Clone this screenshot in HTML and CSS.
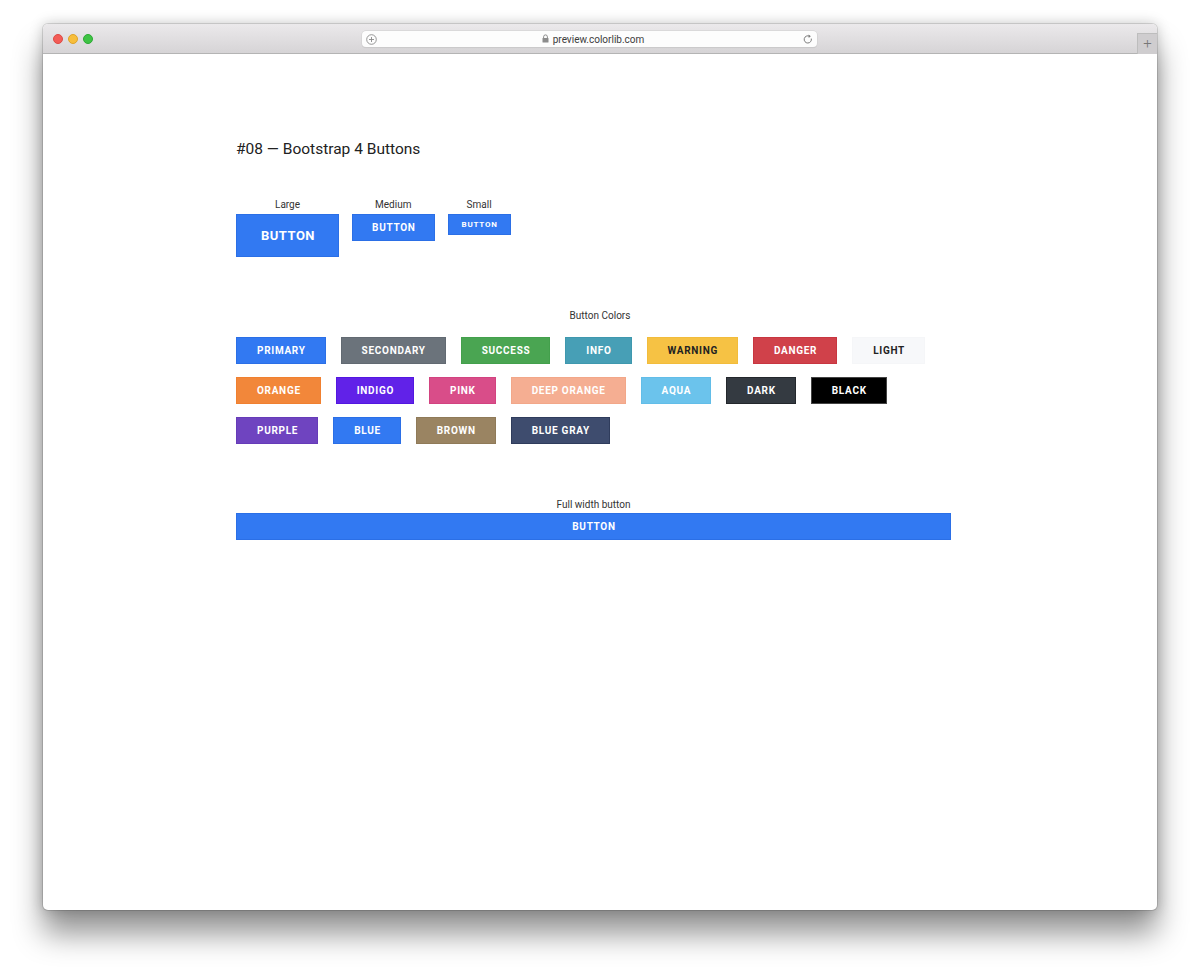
FILE: index.html
```html
<!DOCTYPE html>
<html>
<head>
  <title>#08 - Bootstrap 4 Buttons</title>
  <link rel="stylesheet" href="styles.css">
</head>
<body>
  <div class="window">
    <div class="titlebar">
      <div class="lights">
        <span class="light red"></span>
        <span class="light yellow"></span>
        <span class="light green"></span>
      </div>
      <div class="urlbar">
        <svg class="url-plus" width="11" height="11" viewBox="0 0 11 11">
          <circle cx="5.5" cy="5.5" r="4.8" fill="none" stroke="#8a8a8a" stroke-width="0.9"/>
          <path d="M5.5 3v5M3 5.5h5" stroke="#8a8a8a" stroke-width="0.9"/>
        </svg>
        <div class="url">
          <svg width="7" height="9" viewBox="0 0 7 9">
            <path d="M1.6 4V2.8a1.9 1.9 0 0 1 3.8 0V4" fill="none" stroke="#8c8c8c" stroke-width="1"/>
            <rect x="0.5" y="4" width="6" height="4.6" rx="0.6" fill="#8c8c8c"/>
          </svg>
          <span>preview.colorlib.com</span>
        </div>
        <svg class="url-reload" width="10" height="11" viewBox="0 0 10 11">
          <path d="M8.3 4.6A3.6 3.6 0 1 1 6.4 2.2" fill="none" stroke="#7a7a7a" stroke-width="1"/>
          <path d="M5.6 0.6l2.2 1.6-2.1 1.7z" fill="#7a7a7a"/>
        </svg>
      </div>
      <div class="newtab">+</div>
    </div>

    <div class="page">
      <div class="container">
        <h2 class="heading">#08 &mdash; Bootstrap 4 Buttons</h2>

        <div class="sizes">
          <div class="size">
            <div class="label">Large</div>
            <a class="btn blue btn-lg">Button</a>
          </div>
          <div class="size">
            <div class="label">Medium</div>
            <a class="btn blue btn-md">Button</a>
          </div>
          <div class="size">
            <div class="label">Small</div>
            <a class="btn blue btn-sm">Button</a>
          </div>
        </div>

        <div class="label center colors-label">Button Colors</div>
        <div class="colors">
          <a class="btn primary">Primary</a>
          <a class="btn secondary">Secondary</a>
          <a class="btn success">Success</a>
          <a class="btn info">Info</a>
          <a class="btn warning">Warning</a>
          <a class="btn danger">Danger</a>
          <a class="btn light-btn">Light</a>
        </div>
        <div class="colors">
          <a class="btn orange">Orange</a>
          <a class="btn indigo">Indigo</a>
          <a class="btn pink">Pink</a>
          <a class="btn deep-orange">Deep Orange</a>
          <a class="btn aqua">Aqua</a>
          <a class="btn dark">Dark</a>
          <a class="btn black">Black</a>
        </div>
        <div class="colors">
          <a class="btn purple">Purple</a>
          <a class="btn blue">Blue</a>
          <a class="btn brown">Brown</a>
          <a class="btn blue-gray">Blue Gray</a>
        </div>

        <div class="full">
          <div class="label center">Full width button</div>
          <a class="btn blue btn-block">Button</a>
        </div>
      </div>
    </div>
  </div>
</body>
</html>
```

FILE: styles.css
```css
body, html {
  margin: 0;
  height: 100%;
  background: #fff;
}
body {
  padding: 24px 43px 0;
  box-sizing: border-box;
  font-family: Roboto, "Liberation Sans", sans-serif;
  overflow: hidden;
}
.window {
  width: 1114px;
  height: 886px;
  display: flex;
  flex-direction: column;
  border-radius: 5px;
  overflow: hidden;
  background: #fff;
  box-shadow: 0 24px 30px rgba(0, 0, 0, 0.42), 0 0 14px rgba(0, 0, 0, 0.22), 0 0 0 1px rgba(0, 0, 0, 0.12);
}
.titlebar {
  height: 29px;
  flex: none;
  display: flex;
  align-items: flex-start;
  background: linear-gradient(#ebe9eb, #d6d4d6);
  border-bottom: 1px solid #b4b4b4;
  position: relative;
}
.lights {
  display: flex;
  gap: 5px;
  padding: 10px 0 0 10px;
}
.light {
  width: 10px;
  height: 10px;
  box-sizing: border-box;
  border-radius: 50%;
}
.light.red { background: #f35c57; border: 0.5px solid #dd4a44; }
.light.yellow { background: #f7be3b; border: 0.5px solid #dea42a; }
.light.green { background: #3ec344; border: 0.5px solid #2ca934; }
.urlbar {
  margin: 7px 0 0 269px;
  width: 455px;
  height: 16px;
  box-sizing: border-box;
  background: #fdfdfd;
  border-radius: 4px;
  box-shadow: 0 0 0 0.5px #cfcfcf, 0 0.5px 1px rgba(0, 0, 0, 0.1);
  display: flex;
  align-items: center;
  padding: 0 4px 0 4px;
}
.url {
  flex: 1;
  display: flex;
  justify-content: center;
  align-items: center;
  gap: 4px;
  font-size: 10px;
  color: #3c3c3c;
  padding-left: 6px;
}
.url svg { margin-top: -1px; }
.newtab {
  position: absolute;
  right: 0;
  top: 9px;
  width: 19px;
  height: 20px;
  background: #cfcdcf;
  border-left: 1px solid #bdbdbd;
  border-top: 1px solid #bdbdbd;
  color: #777;
  font-size: 15px;
  font-weight: 300;
  line-height: 19px;
  text-align: center;
}
.page {
  flex: 1;
  padding-top: 85px;
}
.container {
  width: 728px;
  margin: 0 auto;
}
.heading {
  margin: 0 0 39px;
  font-size: 15.5px;
  line-height: 20px;
  font-weight: 400;
  color: #222;
}
.label {
  font-size: 10px;
  line-height: 14px;
  color: #333;
  margin-bottom: 2px;
}
.center { text-align: center; }
.sizes {
  display: flex;
  gap: 13px;
  align-items: flex-start;
}
.size {
  display: flex;
  flex-direction: column;
  align-items: center;
}
.btn {
  display: inline-flex;
  align-items: center;
  justify-content: center;
  box-sizing: border-box;
  height: 27px;
  padding: 0 19px 0 20px;
  font-size: 10px;
  font-weight: 700;
  letter-spacing: 0.7px;
  text-transform: uppercase;
  color: #fff;
  border: 1px solid transparent;
}
.btn-lg {
  height: 43px;
  padding: 0 23px 0 24px;
  font-size: 13px;
  letter-spacing: 0.5px;
}
.btn-md {
  padding: 0 18px 0 19px;
}
.btn-sm {
  height: 21px;
  padding: 0 12px 0 13px;
  font-size: 8px;
  letter-spacing: 0.8px;
}
.btn-block {
  display: flex;
  width: 100%;
}
.colors-label {
  margin-top: 52px;
  margin-bottom: 14px;
}
.colors {
  display: flex;
  gap: 15px;
  margin-bottom: 13px;
}
.full {
  width: 715px;
  margin-top: 54px;
}
.full .label {
  margin-bottom: 1px;
}
.primary, .blue { background: #3279f2; border-color: #2b6fe6; }
.secondary { background: #6b737b; border-color: #626a72; }
.success { background: #4aa552; border-color: #43a04c; }
.info { background: #479fb6; border-color: #3f98ae; }
.warning { background: #f6c244; border-color: #f2bc3b; color: #222; }
.danger { background: #d0414a; border-color: #c83640; }
.light-btn { background: #f7f8fa; border-color: #f5f6f8; color: #222; }
.orange { background: #f2873a; border-color: #f08030; }
.indigo { background: #6122e8; border-color: #5317e0; }
.pink { background: #d94d89; border-color: #d24380; }
.deep-orange { background: #f5ae92; border-color: #f2a789; }
.aqua { background: #6bc3ec; border-color: #62bde8; }
.dark { background: #343a41; border-color: #23272c; }
.black { background: #000; border-color: #444; }
.purple { background: #6f44c0; border-color: #663bb8; }
.brown { background: #9a8462; border-color: #8f7a58; }
.blue-gray { background: #3e4c6e; border-color: #2f3c5c; }
```
